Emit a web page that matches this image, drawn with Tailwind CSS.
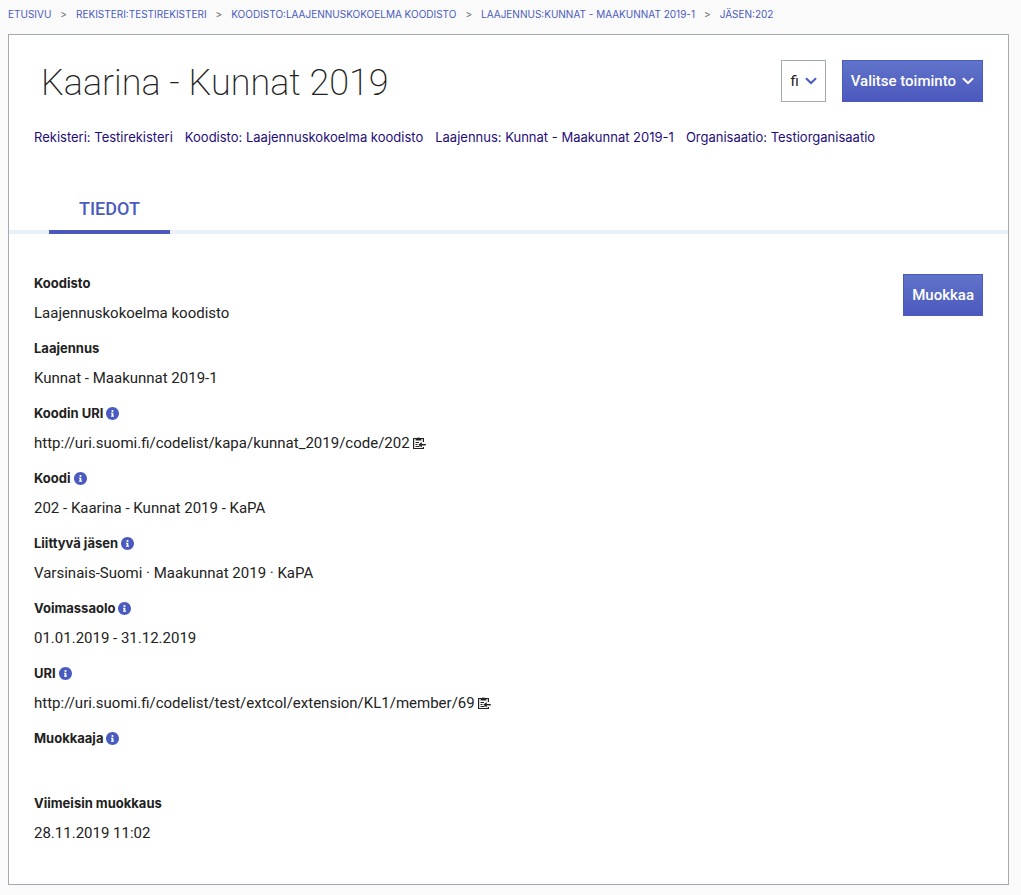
<!DOCTYPE html>
<html lang="fi">
<head>
<meta charset="utf-8">
<title>Kaarina - Kunnat 2019</title>
<script src="https://cdn.jsdelivr.net/npm/@tailwindcss/browser@4"></script>
</head>
<body class="min-h-screen flex flex-col bg-[#fafafa] font-['Inter',sans-serif] text-[#222]">
<svg class="hidden">
  <symbol id="info" viewBox="8 8 496 496"><path fill="currentColor" d="M256 8C119 8 8 119 8 256s111 248 248 248 248-111 248-248S393 8 256 8zm0 110a42 42 0 1 1 0 84 42 42 0 0 1 0-84zm56 254c0 7-5 12-12 12h-88c-7 0-12-5-12-12v-24c0-7 5-12 12-12h12v-64h-12c-7 0-12-5-12-12v-24c0-7 5-12 12-12h64c7 0 12 5 12 12v100h12c7 0 12 5 12 12v24z"/></symbol>
  <symbol id="copy" viewBox="0 0 14 14"><g fill="none" stroke="currentColor"><path stroke-width="1.2" d="M11.400 6V2.500H1.600v10h9.800V11"/><path stroke-width="1" d="M3.500 6.500h3.500M3.500 8.500h2M3.500 10.500h4"/><path stroke-width="1.500" d="M13.800 8.700H8"/></g><path fill="currentColor" fill-rule="evenodd" d="M3.600 4.600V2.300h1.300a1.700 1.700 0 0 1 3.200 0h1.300v2.300zM6.500 1.500a.8.800 0 1 0 0 1.600.8.800 0 0 0 0-1.600zM6.300 8.700 9.700 5.900v5.600z"/></symbol>
  <symbol id="chev" viewBox="0 0 12 8"><path d="m1.500 1.700 4.500 4.300 4.500-4.300" fill="none" stroke="currentColor" stroke-width="2" stroke-linecap="round" stroke-linejoin="miter"/></symbol>
</svg>
<nav class="flex gap-[9px] px-2 pt-[7px] pb-[13px] text-[10px] leading-[14px] uppercase text-[#4a5bc0]">
  <a href="#">Etusivu</a><span class="text-[#666]">&gt;</span>
  <a href="#">Rekisteri:Testirekisteri</a><span class="text-[#666]">&gt;</span>
  <a href="#">Koodisto:Laajennuskokoelma koodisto</a><span class="text-[#666]">&gt;</span>
  <a href="#">Laajennus:Kunnat - Maakunnat 2019-1</a><span class="text-[#666]">&gt;</span>
  <a href="#">Jäsen:202</a>
</nav>
<main class="grow ml-2 mr-3 mb-[10px] border border-[#a5a9b1] bg-white pt-[25px]">
  <header class="flex items-start justify-between px-[25px]">
    <h1 class="pl-[7px] font-['Roboto',sans-serif] text-[36px] leading-[46px] font-extralight">Kaarina - Kunnat 2019</h1>
    <div class="flex gap-4">
      <button class="flex h-[42px] items-center gap-[6px] border border-[#a5a9b1] px-2 font-['Roboto',sans-serif] text-[15px]">fi <svg class="h-2 w-3 text-[#4a5bc0]"><use href="#chev"/></svg></button>
      <button class="flex h-[42px] items-center gap-[6px] border border-[#4a5bc0] bg-linear-to-b from-[#6074c9] to-[#4d58be] px-2 font-['Roboto',sans-serif] text-[15px] font-medium text-white">Valitse toiminto <svg class="h-2 w-3"><use href="#chev"/></svg></button>
    </div>
  </header>
  <div class="mt-[21px] flex gap-3 px-[25px] text-[13px] leading-5 text-[#1f0d7a]">
    <span>Rekisteri: Testirekisteri</span><span>Koodisto: Laajennuskokoelma koodisto</span><span>Laajennus: Kunnat - Maakunnat 2019-1</span><span>Organisaatio: Testiorganisaatio</span>
  </div>
  <div class="mt-[37px] flex border-b-4 border-[#eaf0fa] pl-10">
    <button class="-mb-1 border-b-4 border-[#4d58be] px-[30px] pt-3 pb-2 font-['Roboto',sans-serif] text-[18px] leading-[26px] font-medium text-[#4a5bc0]">TIEDOT</button>
  </div>
  <section class="flex items-start justify-between px-[25px] pt-10">
    <dl class="-mt-px font-['Roboto',sans-serif] text-[15px] leading-5 [&>dt]:flex [&>dt]:items-center [&>dt]:gap-[3px] [&>dt]:font-['Inter',sans-serif] [&>dt]:text-[13px] [&>dt]:font-bold [&>dd]:flex [&>dd]:h-5 [&>dd]:items-center [&>dd]:gap-[2px] [&>dd]:mt-[10px] [&>dd]:mb-[15px]">
      <dt>Koodisto</dt><dd>Laajennuskokoelma koodisto</dd>
      <dt>Laajennus</dt><dd>Kunnat - Maakunnat 2019-1</dd>
      <dt>Koodin URI <svg class="size-[13px] text-[#4a5bc0]"><use href="#info"/></svg></dt><dd>http://uri.suomi.fi/codelist/kapa/kunnat_2019/code/202 <svg class="size-[14px]"><use href="#copy"/></svg></dd>
      <dt>Koodi <svg class="size-[13px] text-[#4a5bc0]"><use href="#info"/></svg></dt><dd>202 - Kaarina - Kunnat 2019 - KaPA</dd>
      <dt>Liittyvä jäsen <svg class="size-[13px] text-[#4a5bc0]"><use href="#info"/></svg></dt><dd>Varsinais-Suomi · Maakunnat 2019 · KaPA</dd>
      <dt>Voimassaolo <svg class="size-[13px] text-[#4a5bc0]"><use href="#info"/></svg></dt><dd>01.01.2019 - 31.12.2019</dd>
      <dt>URI <svg class="size-[13px] text-[#4a5bc0]"><use href="#info"/></svg></dt><dd>http://uri.suomi.fi/codelist/test/extcol/extension/KL1/member/69 <svg class="size-[14px]"><use href="#copy"/></svg></dd>
      <dt>Muokkaaja <svg class="size-[13px] text-[#4a5bc0]"><use href="#info"/></svg></dt><dd></dd>
      <dt>Viimeisin muokkaus</dt><dd>28.11.2019 11:02</dd>
    </dl>
    <button class="h-[42px] border border-[#4a5bc0] bg-linear-to-b from-[#6074c9] to-[#4d58be] px-2 font-['Roboto',sans-serif] text-[15px] font-medium text-white">Muokkaa</button>
  </section>
</main>
</body>
</html>
